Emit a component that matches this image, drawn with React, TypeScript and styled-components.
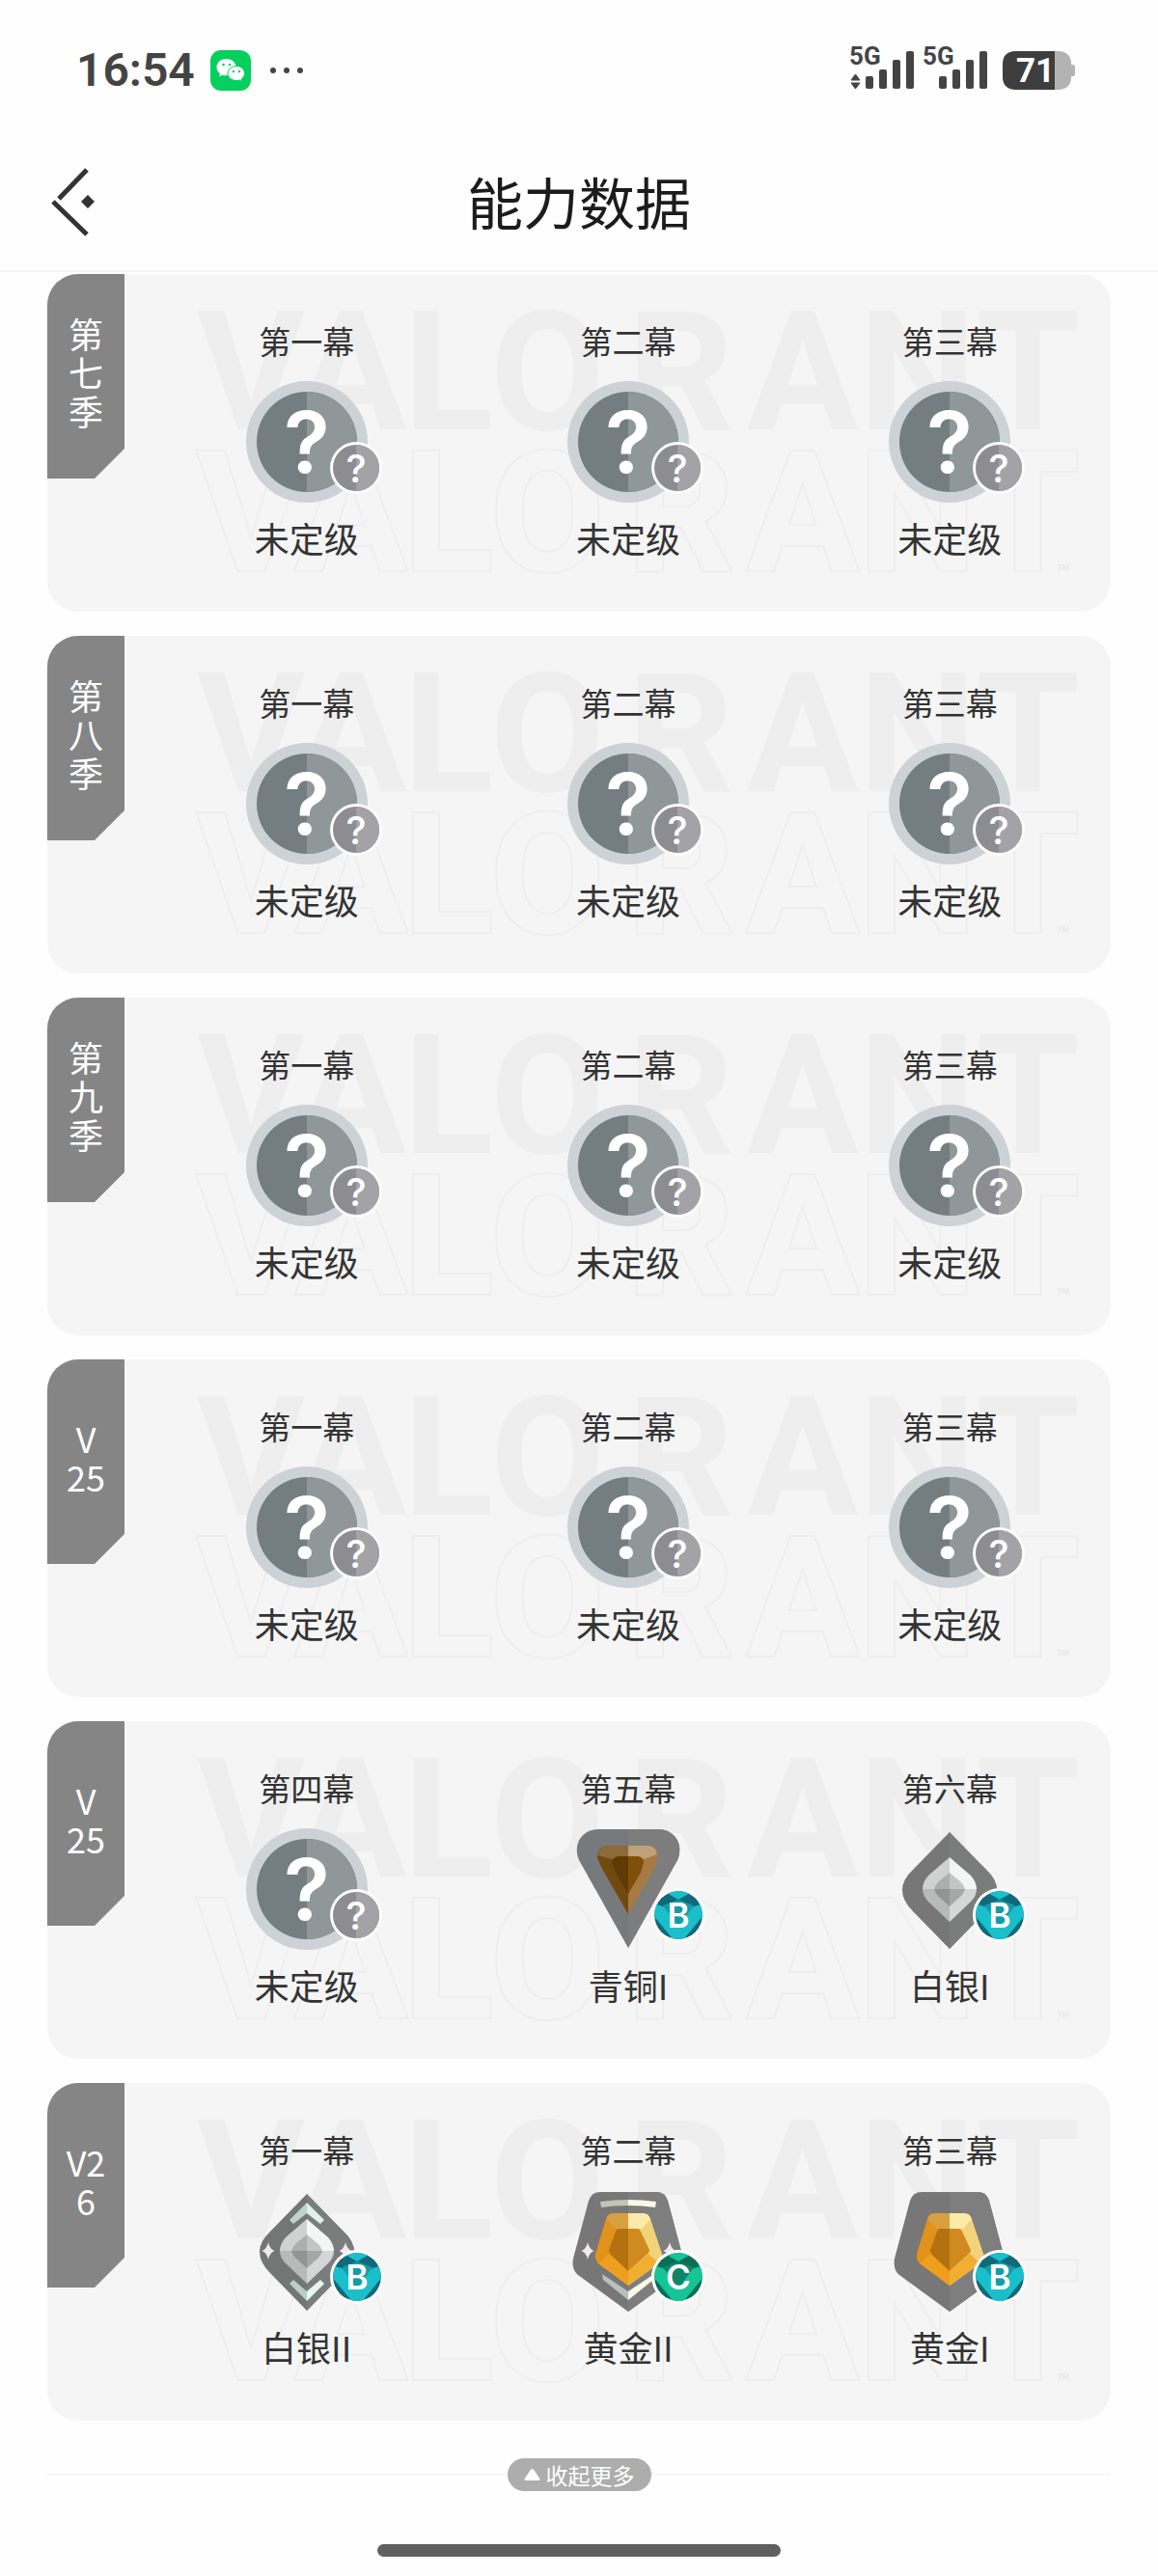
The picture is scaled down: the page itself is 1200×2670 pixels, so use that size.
import { useId } from "react";
import styled, { createGlobalStyle } from "styled-components";

type Tier = "unranked" | "bronze" | "silver" | "silver2" | "gold" | "gold2";
type Grade = "?" | "B" | "C";

interface Act {
    name: string;
    tier: Tier;
    grade: Grade;
    rank: string;
}

interface Season {
    id: string;
    label: string[];
    acts: Act[];
}

const unranked = (name: string): Act => ({ name, tier: "unranked", grade: "?", rank: "未定级" });
const firstActs = [unranked("第一幕"), unranked("第二幕"), unranked("第三幕")];

const seasons: Season[] = [
    { id: "s7", label: ["第", "七", "季"], acts: firstActs },
    { id: "s8", label: ["第", "八", "季"], acts: firstActs },
    { id: "s9", label: ["第", "九", "季"], acts: firstActs },
    { id: "v25a", label: ["V", "25"], acts: firstActs },
    {
        id: "v25b",
        label: ["V", "25"],
        acts: [
            unranked("第四幕"),
            { name: "第五幕", tier: "bronze", grade: "B", rank: "青铜I" },
            { name: "第六幕", tier: "silver", grade: "B", rank: "白银I" },
        ],
    },
    {
        id: "v26",
        label: ["V2", "6"],
        acts: [
            { name: "第一幕", tier: "silver2", grade: "B", rank: "白银II" },
            { name: "第二幕", tier: "gold2", grade: "C", rank: "黄金II" },
            { name: "第三幕", tier: "gold", grade: "B", rank: "黄金I" },
        ],
    },
];

const GlobalStyle = createGlobalStyle`
  * {
    box-sizing: border-box;
  }
  body {
    margin: 0;
    background: #FEFEFE;
    color: #333333;
    font-family: "Noto Sans CJK SC", "Noto Sans", sans-serif;
  }
`;

const Page = styled.div`
display: flex;
flex-direction: column;
`;
const StatusBar = styled.div`
display: flex;
align-items: center;
justify-content: space-between;
height: 146px;
padding: 0 86px 0 79px;
color: #444444;
font-family: Roboto, sans-serif;
`;
const StatusGroup = styled.div<{ $gap: number }>`
display: flex;
align-items: center;
gap: ${({ $gap }) => $gap}px;
`;
const Clock = styled.time`
font-size: 48px;
font-weight: 600;
line-height: 58px;
`;
const StatusIcon = styled.svg`
display: block;
flex: none;
overflow: visible;
`;
const Header = styled.header`
display: grid;
grid-template-columns: 80px 1fr 80px;
align-items: center;
height: 136px;
padding: 0 40px 10px;
border-bottom: 2px solid #F5F5F5;
`;
const BackButton = styled.button`
width: 80px;
height: 80px;
padding: 0;
background: transparent;
border: none;
cursor: pointer;
`;
const Title = styled.h1`
margin: 0;
color: #1C1C1C;
font-size: 58px;
font-weight: 400;
line-height: 80px;
text-align: center;
`;
const SeasonList = styled.main`
display: flex;
flex-direction: column;
gap: 25px;
padding: 2px 49px 0;
`;
const SeasonCard = styled.section`
position: relative;
display: flex;
align-items: flex-start;
gap: 22px;
min-height: 350px;
background: #F5F5F5;
border-radius: 32px;
overflow: hidden;
`;
const Watermark = styled.svg`
position: absolute;
top: 0;
right: 0;
height: 100%;
font-family: Roboto, sans-serif;
font-weight: 700;
font-size: 172px;
`;
const SeasonTab = styled.h2`
position: relative;
display: flex;
flex-direction: column;
align-items: center;
justify-content: center;
flex: none;
width: 80px;
height: 212px;
margin: 0;
padding-bottom: 10px;
background: #858585;
color: #FFFFFF;
font-size: 36px;
font-weight: 400;
line-height: 40px;
clip-path: polygon(0 0, 100% 0, 100% calc(100% - 31px), calc(100% - 31px) 100%, 0 100%);
`;
const ActGrid = styled.div`
position: relative;
display: grid;
grid-template-columns: repeat(3, 1fr);
flex: 1;
padding-top: 45px;
`;
const ActCell = styled.div`
display: flex;
flex-direction: column;
align-items: center;
`;
const ActName = styled.span`
margin-bottom: 18px;
font-size: 33px;
line-height: 48px;
`;
const RankIcon = styled.svg`
display: block;
width: 126px;
height: 126px;
overflow: visible;
`;
const RankName = styled.span`
margin-top: 11px;
font-size: 36px;
line-height: 50px;
`;
const Footer = styled.footer`
display: flex;
flex-direction: column;
align-items: center;
padding: 39px 49px 20px;
`;
const MoreRow = styled.div`
display: flex;
align-items: center;
width: 100%;
margin-bottom: 55px;
`;
const Rule = styled.span`
flex: 1;
height: 2px;
background: #F7F7F7;
`;
const CollapseButton = styled.button`
display: flex;
align-items: center;
gap: 6px;
height: 34px;
padding: 0 17px;
background: #ADADAD;
color: #FFFFFF;
border: none;
border-radius: 17px;
font-family: inherit;
font-size: 23px;
line-height: 34px;
cursor: pointer;
`;
const HomeIndicator = styled.div`
width: 38%;
height: 13px;
background: #606060;
border-radius: 7px;
`;

const WeChatIcon = () => (
    <StatusIcon width="42" height="42" viewBox="0 0 42 42" aria-label="微信">
        <rect width="42" height="42" rx="11" fill="#05D05C" />
        <path d="M16.500 9C10.500 9 6.500 13 6.500 17.800c0 2.700 1.400 5 3.500 6.600l-.8 2.900 3.500-1.600c1.200.4 2.500.6 3.800.6 6 0 10.200-3.800 10.200-8.500S22.500 9 16.500 9z" fill="#FFFFFF" />
        <path d="M27 16.500c-5 0-9 3.300-9 7.500s4 7.500 9 7.500c1.100 0 2.200-.2 3.200-.5l2.800 1.500-.7-2.600c2-1.400 3.200-3.500 3.200-5.900 0-4.200-3.700-7.500-8.500-7.500z" fill="#FFFFFF" stroke="#05D05C" strokeWidth="1" />
        <g fill="#05D05C">
            <circle cx="13.500" cy="15" r="1.300" />
            <circle cx="20" cy="15" r="1.300" />
            <circle cx="24" cy="22" r="1.200" />
            <circle cx="30" cy="22" r="1.200" />
        </g>
    </StatusIcon>
);

const MoreIcon = () => (
    <StatusIcon width="34" height="6" viewBox="0 0 34 6" fill="#444444">
        <circle cx="3" cy="3" r="3" />
        <circle cx="17" cy="3" r="3" />
        <circle cx="31" cy="3" r="3" />
    </StatusIcon>
);

const SignalIcon = ({ data }: { data?: boolean }) => (
    <StatusIcon width="67" height="46" viewBox="0 0 67 46" fill="#444444">
        <text x="0" y="17" fontSize="26" fontWeight="700">5G</text>
        {data && <path d="M6.500 27l4.500 6h-9zM6.500 42l4.500-6h-9z" stroke="#444444" strokeLinejoin="round" />}
        <rect x="17" y="29" width="8" height="13" rx="2" />
        <rect x="31" y="22" width="8" height="20" rx="2" />
        <rect x="45" y="12" width="8" height="30" rx="2" />
        <rect x="59" y="3" width="8" height="39" rx="2" />
    </StatusIcon>
);

const BatteryIcon = () => (
    <StatusIcon width="75" height="40" viewBox="0 0 75 40">
        <path d="M54 0h4c8 0 13 5 13 12v2h2q2 0 2 2v8q0 2-2 2h-2v2c0 7-5 12-13 12h-4z" fill="#B3B3B3" />
        <path d="M13 0h41v40H13C5 40 0 35 0 27V13C0 5 5 0 13 0z" fill="#3E3E3E" />
        <text x="34" y="32" fontSize="35" fontWeight="700" fill="#FFFFFF" textAnchor="middle">71</text>
    </StatusIcon>
);

const BackIcon = () => (
    <StatusIcon width="80" height="80" viewBox="0 0 80 80" fill="none" stroke="#333333" strokeWidth="5">
        <path d="M50 8L21 38M15 41l35 34" />
        <path d="M51 34l7 7-7 7-7-7z" fill="#333333" stroke="none" />
    </StatusIcon>
);

const LETTERS_X = "204 306 418 508 650 774 890 1012";

// solid wordmark above, outlined one below
const SeasonWatermark = () => (
    <Watermark viewBox="129 0 1022 350" aria-hidden="true">
        <text x={LETTERS_X} y="161" fill="#EEEEEE">VALORANT</text>
        <text x={LETTERS_X} y="307" fill="#F5F5F5" stroke="#EEEEEE" strokeWidth="4" paintOrder="stroke">VALORANT</text>
        <text x="1094" y="318" fill="#EAEAEA" fontSize="24">™</text>
    </Watermark>
);

const Sparkle = ({ x }: { x: number }) => (
    <path d={`M${x} 54q1.500 7 6.500 9-5 2-6.500 9-1.500-7-6.500-9 5-2 6.500-9z`} fill="#EFEAEE" />
);

const UnrankedShape = () => (
    <>
        <circle cx="63" cy="63" r="63" fill="#CCD2D5" />
        <circle cx="63" cy="63" r="52" fill="#747D80" />
        <path d="M63 11a52 52 0 0 1 0 104z" fill="#8F9799" />
        <text x="63" y="95" fontFamily="Inter, sans-serif" fontSize="88" fontWeight="600" fill="#FFFFFF" textAnchor="middle">?</text>
    </>
);

const BronzeShape = () => (
    <>
        <path d="M32 1H94C111 1 121 17 114 33L63 124 12 33C5 17 15 1 32 1z" fill="#777A7C" />
        <path d="M63 1H94C111 1 121 17 114 33L63 124z" fill="#7D7D7D" />
        <path d="M63 18H42Q31 19 31 31L36 42 63 89z" fill="#71490F" />
        <path d="M63 18H42Q33 19 31 28L46 32 53 29H63z" fill="#8E6A3A" />
        <path d="M63 18H84Q95 19 93 33L90 42 63 89z" fill="#A67A45" />
        <path d="M63 18H84Q92 19 93 27L79 32 73 29H63z" fill="#C0A27A" />
        <path d="M63 29H54Q47 29 46 36L50 46 63 68z" fill="#5E3A05" />
        <path d="M63 29H72Q79 29 79 36L76 46 63 68z" fill="#80500A" />
    </>
);

const SilverShape = ({ winged }: { winged?: boolean }) => (
    <>
        <path d="M63 4L101 43Q112 53 112 64T101 86L63 125 25 86Q14 75 14 64T25 43z" fill={winged ? "#727674" : "#777777"} />
        <path d="M63 4L101 43Q112 53 112 64T101 86L63 125z" fill="#7B7D7C" />
        {winged && (
            <>
                <path d="M63 13L81 31 77 35 63 24z" fill="#DDF2EA" />
                <path d="M63 13L45 31 49 35 63 24z" fill="#BFD3CC" />
                <path d="M63 115L81 97 77 93 63 105z" fill="#E6F7F0" />
                <path d="M63 115L45 97 49 93 63 105z" fill="#B9CEC7" />
                <Sparkle x={23} />
                <Sparkle x={103} />
            </>
        )}
        <path d="M63 30L41 49Q35 56 35 63H63z" fill="#CED3D1" />
        <path d="M63 30L85 49Q91 56 91 63H63z" fill="#F4F6F5" />
        <path d="M35 63Q35 70 41 76L63 97V63z" fill="#B6BAB8" />
        <path d="M91 63Q91 70 85 76L63 97V63z" fill="#D4D7D6" />
        <path d="M63 46L51 56Q48 59 47 63H63z" fill="#ABAFAD" />
        <path d="M63 46L75 56Q78 59 79 63H63z" fill="#C3C6C5" />
        <path d="M47 63Q48 67 51 70L63 81V63z" fill="#919593" />
        <path d="M79 63Q78 67 75 70L63 81V63z" fill="#A5A8A7" />
    </>
);

const GoldShape = ({ winged }: { winged?: boolean }) => (
    <>
        <path d="M34 2H92Q101 2 104 11L120 71Q122 82 115 88L63 126 11 88Q4 82 6 71L22 11Q25 2 34 2z" fill="#777777" />
        <path d="M63 2H92Q101 2 104 11L120 71Q122 82 115 88L63 126z" fill="#7E7E7E" />
        {winged && (
            <>
                <path d="M34 12Q48 10 63 10V16Q48 16 35 18z" fill="#C4C5B7" />
                <path d="M92 12Q78 10 63 10V16Q78 16 91 18z" fill="#F8F8E6" />
                <path d="M36 87L63 105V114L37 93z" fill="#B9BFBE" />
                <path d="M90 87L63 105V114L89 93z" fill="#F8F8E6" />
                <Sparkle x={21} />
                <Sparkle x={106} />
            </>
        )}
        <path d="M63 24H48Q42 24 40 30L29 66Q28 72 32 76L63 99z" fill="#E0921B" />
        <path d="M63 24H48Q42 24 40 30L50 40H63z" fill="#D9A040" />
        <path d="M63 99L32 76 43 66 63 84z" fill="#EF9F1E" />
        <path d="M63 24H78Q84 24 86 30L98 66Q99 72 95 76L63 99z" fill="#F3D37A" />
        <path d="M63 24H78Q84 24 86 30L77 40H63z" fill="#FBEBA9" />
        <path d="M63 99L95 76 84 66 63 84z" fill="#F0AF32" />
        <path d="M63 40H54Q51 40 50 43L43 62Q43 65 45 67L63 84z" fill="#B3720F" />
        <path d="M63 40H72Q75 40 76 43L85 62Q85 65 82 67L63 84z" fill="#D18A20" />
    </>
);

const gradeColors = {
    B: { dark: "#11697A", mid: "#1699A8", light: "#19BFCB" },
    C: { dark: "#0B6F57", mid: "#0F8468", light: "#16C596" },
};

const GradeBadge = ({ grade }: { grade: Grade }) => {
    const clipId = useId();
    if (grade === "?") {
        return (
            <g transform="translate(114 90)">
                <circle r="27" fill="#FCFCFC" />
                <circle r="24" fill="#8D8D91" />
                <path d="M0-24a24 24 0 0 1 0 48z" fill="#A3A3A7" />
                <text y="15" fontFamily="Inter, sans-serif" fontSize="40" fontWeight="500" fill="#FFFFFF" textAnchor="middle">?</text>
            </g>
        );
    }
    const colors = gradeColors[grade];
    return (
        <g transform="translate(115 90)">
            <clipPath id={clipId}>
                <circle r="25" />
            </clipPath>
            <circle r="28" fill="#FCFCFC" />
            <g clipPath={`url(#${clipId})`}>
                <circle r="25" fill={colors.dark} />
                <path d="M-26-12L-13-8 0 9 13-8 26-12V0L4 27H-4L-26 0z" fill={colors.light} />
                <path d="M-14-24L0-16 14-24 12-27H-12z" fill={colors.light} />
                <path d="M-16-10L0-16 16-10 0 12z" fill={colors.mid} />
            </g>
            <text y="13" fontFamily="Inter, sans-serif" fontSize="35" fontWeight="600" fill="#FFFFFF" textAnchor="middle">{grade}</text>
        </g>
    );
};

const RankEmblem = ({ tier, grade }: { tier: Tier; grade: Grade }) => (
    <RankIcon viewBox="0 0 126 126">
        {tier === "unranked" && <UnrankedShape />}
        {tier === "bronze" && <BronzeShape />}
        {(tier === "silver" || tier === "silver2") && <SilverShape winged={tier === "silver2"} />}
        {(tier === "gold" || tier === "gold2") && <GoldShape winged={tier === "gold2"} />}
        <GradeBadge grade={grade} />
    </RankIcon>
);

const App = () => {
    return (
        <Page>
            <GlobalStyle />
            <StatusBar>
                <StatusGroup $gap={20}>
                    <StatusGroup $gap={16}>
                        <Clock>16:54</Clock>
                        <WeChatIcon />
                    </StatusGroup>
                    <MoreIcon />
                </StatusGroup>
                <StatusGroup $gap={16}>
                    <StatusGroup $gap={9}>
                        <SignalIcon data />
                        <SignalIcon />
                    </StatusGroup>
                    <BatteryIcon />
                </StatusGroup>
            </StatusBar>
            <Header>
                <BackButton type="button" aria-label="返回">
                    <BackIcon />
                </BackButton>
                <Title>能力数据</Title>
            </Header>
            <SeasonList>
                {seasons.map((season) => (
                    <SeasonCard key={season.id}>
                        <SeasonWatermark />
                        <SeasonTab>
                            {season.label.map((line) => (
                                <span key={line}>{line}</span>
                            ))}
                        </SeasonTab>
                        <ActGrid>
                            {season.acts.map((act) => (
                                <ActCell key={act.name}>
                                    <ActName>{act.name}</ActName>
                                    <RankEmblem tier={act.tier} grade={act.grade} />
                                    <RankName>{act.rank}</RankName>
                                </ActCell>
                            ))}
                        </ActGrid>
                    </SeasonCard>
                ))}
            </SeasonList>
            <Footer>
                <MoreRow>
                    <Rule />
                    <CollapseButton type="button">
                        <svg width="17" height="12" viewBox="0 0 17 12" fill="#FFFFFF">
                            <path d="M8.500 0q1 0 1.800 1l6 9q.7 2-1 2H1.700q-1.700 0-1-2l6-9q.8-1 1.800-1z" />
                        </svg>
                        收起更多
                    </CollapseButton>
                    <Rule />
                </MoreRow>
                <HomeIndicator />
            </Footer>
        </Page>
    );
};

export default App;
